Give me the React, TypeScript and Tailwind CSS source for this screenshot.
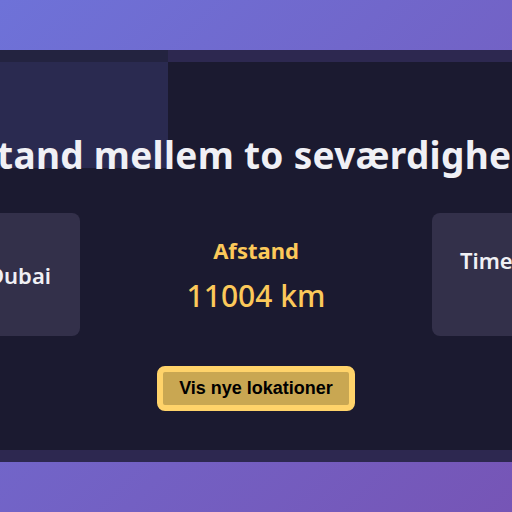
export default function App() {
  return (
    <div className="min-h-screen flex items-center overflow-hidden bg-[linear-gradient(135deg,#6e72d8_0%,#7655b6_100%)] font-['Noto_Sans',sans-serif]">
      <div className="relative w-full bg-[#2d2850] py-3">
        <div className="absolute left-0 top-0 h-3 w-[168px] bg-[#232340]" />
        <div className="relative flex flex-col items-center bg-[#1b1a30] pt-[73px] pb-[39px]">
          <div className="absolute left-0 top-0 h-[106px] w-[168px] bg-[#2a2a50]" />

          <h1 className="relative whitespace-nowrap text-[37px] font-bold leading-[40px] tracking-[0.3px] text-[#f0f0f5]">
            Afstand mellem to seværdigheder
          </h1>

          <div className="mt-[38px] grid w-[900px] shrink-0 grid-cols-[1fr_auto_1fr] items-center gap-[40px]">
            <div className="flex h-[123px] items-center justify-self-end rounded-lg bg-[#33304a] px-[29px]">
              <span className="text-[22px] font-semibold leading-[30px] text-[#f0f0f5]">Dubai</span>
            </div>

            <div className="flex w-[272px] flex-col items-center">
              <span className="text-[22px] font-bold leading-[28px] text-[#fcc95a]">Afstand</span>
              <span className="mt-[14px] text-[30px] font-medium leading-[36px] text-[#fcc95a]">11004 km</span>
            </div>

            <div className="flex h-[123px] items-center justify-self-start rounded-lg bg-[#33304a] px-[28px]">
              <span className="whitespace-nowrap text-center text-[22px] font-semibold leading-[30px] text-[#f0f0f5]">
                Times Square, New
                <br />
                York
              </span>
            </div>
          </div>

          <button className="mt-[30px] h-[45px] w-[198px] rounded-lg border-[6px] border-[#ffd36a] bg-[#c9a752] font-['Liberation_Sans',Arial,sans-serif] text-[18px] font-bold text-black">
            Vis nye lokationer
          </button>
        </div>
      </div>
    </div>
  );
}
